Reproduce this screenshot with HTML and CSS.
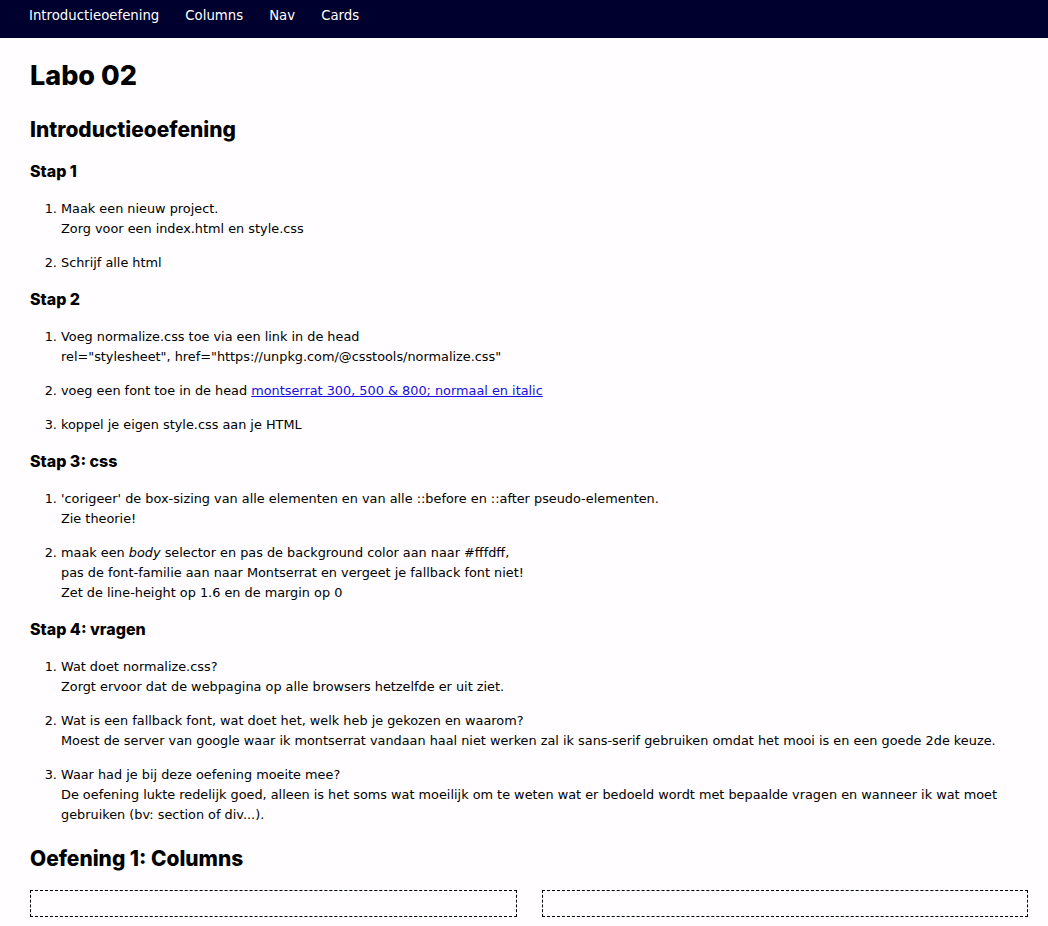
FILE: index.html
```html
<!DOCTYPE html>
<html lang="nl">
<head>
<meta charset="utf-8">
<title>Labo 02</title>
<link rel="stylesheet" href="styles.css">
</head>
<body>
<nav class="topnav">
  <a href="#intro">Introductieoefening</a>
  <a href="#columns">Columns</a>
  <a href="#nav">Nav</a>
  <a href="#cards">Cards</a>
</nav>
<main class="page">
  <h1 class="title">Labo 02</h1>
  <section id="intro">
    <h2 class="section-title">Introductieoefening</h2>
    <h3 class="step">Stap 1</h3>
    <ol class="steps">
      <li>Maak een nieuw project.<br>Zorg voor een index.html en style.css</li>
      <li>Schrijf alle html</li>
    </ol>
    <h3 class="step">Stap 2</h3>
    <ol class="steps">
      <li>Voeg normalize.css toe via een link in de head<br>rel="stylesheet", href="https://unpkg.com/@csstools/normalize.css"</li>
      <li>voeg een font toe in de head <a href="#">montserrat 300, 500 &amp; 800; normaal en italic</a></li>
      <li>koppel je eigen style.css aan je HTML</li>
    </ol>
    <h3 class="step">Stap 3: css</h3>
    <ol class="steps">
      <li>'corigeer' de box-sizing van alle elementen en van alle ::before en ::after pseudo-elementen.<br>Zie theorie!</li>
      <li>maak een <em>body</em> selector en pas de background color aan naar #fffdff,<br>pas de font-familie aan naar Montserrat en vergeet je fallback font niet!<br>Zet de line-height op 1.6 en de margin op 0</li>
    </ol>
    <h3 class="step">Stap 4: vragen</h3>
    <ol class="steps">
      <li>Wat doet normalize.css?<br>Zorgt ervoor dat de webpagina op alle browsers hetzelfde er uit ziet.</li>
      <li>Wat is een fallback font, wat doet het, welk heb je gekozen en waarom?<br>Moest de server van google waar ik montserrat vandaan haal niet werken zal ik sans-serif gebruiken omdat het mooi is en een goede 2de keuze.</li>
      <li>Waar had je bij deze oefening moeite mee?<br>De oefening lukte redelijk goed, alleen is het soms wat moeilijk om te weten wat er bedoeld wordt met bepaalde vragen en wanneer ik wat moet gebruiken (bv: section of div...).</li>
    </ol>
  </section>
  <section id="columns">
    <h2 class="section-title">Oefening 1: Columns</h2>
    <div class="columns">
      <div class="col"></div>
      <div class="col"></div>
    </div>
  </section>
</main>
</body>
</html>
```
FILE: styles.css
```css
* { box-sizing: border-box; }
html, body { margin: 0; padding: 0; }
body {
  background: #fffdff;
  color: #000;
  font-family: "DejaVu Sans", sans-serif;
  font-size: 12.85px;
  line-height: 20px;
}
.topnav {
  background: #00002e;
  height: 38px;
  display: flex;
  align-items: flex-start;
  gap: 26px;
  padding: 6px 29px 0;
}
.topnav a {
  color: #fff;
  text-decoration: none;
  font-size: 13.3px;
  line-height: 20px;
}
.page {
  padding: 22px 20px 0 30px;
}
.title, .section-title, .step {
  font-family: Inter, "DejaVu Sans", sans-serif;
  font-weight: 800;
}
.title {
  font-size: 27px;
  line-height: 32px;
  margin: 0 0 25px;
}
.section-title {
  font-size: 20.9px;
  line-height: 26px;
  margin: 0 0 18px;
}
.step {
  font-size: 16px;
  line-height: 20px;
  margin: 0 0 18px;
}
.steps {
  margin: 0 0 16px;
  padding-left: 31px;
}
.steps li { margin-bottom: 14px; }
.steps li:last-child { margin-bottom: 0; }
.steps a { color: #1a0de0; }
#columns .section-title { margin-top: 21px; margin-bottom: 18px; }
.columns {
  display: grid;
  grid-template-columns: 1fr 1fr;
  gap: 25px;
}
.col {
  height: 27px;
  border: 1px dashed #000;
}
```
